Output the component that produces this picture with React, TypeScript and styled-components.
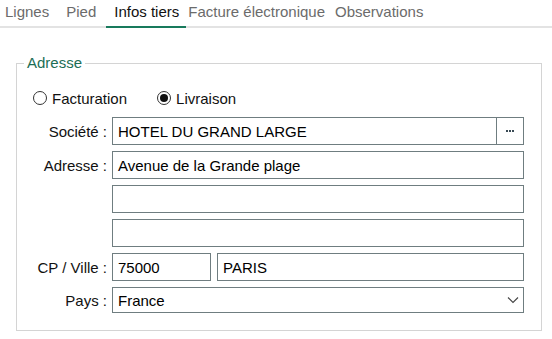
import React from "react";
import styled, { createGlobalStyle } from "styled-components";

const Global = createGlobalStyle`
  html, body { margin: 0; padding: 0; background: #fff; }
  body { font-family: "Liberation Sans", Arial, sans-serif; font-size: 15px; color: #111; }
`;

const Page = styled.div`
  width: 552px;
  height: 339px;
  overflow: hidden;
`;

const TabBar = styled.div`
  display: flex;
  align-items: flex-end;
  height: 26px;
  border-bottom: 2px solid #e3e3e3;
`;

const Tab = styled.div<{ $active?: boolean; $ml?: number }>`
  height: 26px;
  line-height: 24px;
  padding: 0 ${(p) => (p.$active ? "7px 0 8px" : "5px")};
  margin-left: ${(p) => p.$ml ?? 0}px;
  margin-bottom: -2px;
  color: ${(p) => (p.$active ? "#111" : "#6b6b6b")};
  border-bottom: 2px solid ${(p) => (p.$active ? "#187a5c" : "transparent")};
  white-space: nowrap;
`;

const Group = styled.fieldset`
  margin: 26px 10px 0 16px;
  padding: 16px 17px 17px 16px;
  border: 1px solid #d4d4d4;
  min-width: 0;
`;

const Legend = styled.legend`
  margin-left: -9px;
  padding: 0 3px;
  line-height: 18px;
  color: #1c6e55;
`;

const RadioRow = styled.div`
  display: flex;
  align-items: center;
  gap: 30px;
  height: 20px;
  margin-bottom: 9px;
`;

const RadioItem = styled.label`
  display: flex;
  align-items: center;
  gap: 5px;
  color: #111;
`;

const Circle = styled.span<{ $checked?: boolean }>`
  width: 12px;
  height: 12px;
  border: 1.5px solid #333;
  border-radius: 50%;
  display: flex;
  align-items: center;
  justify-content: center;
  &::after {
    content: "";
    width: 8px;
    height: 8px;
    border-radius: 50%;
    background: ${(p) => (p.$checked ? "#111" : "transparent")};
  }
`;

const Form = styled.div`
  display: grid;
  grid-template-columns: 74px 1fr;
  column-gap: 5px;
  row-gap: 6px;
  align-items: center;
`;

const Label = styled.div`
  text-align: right;
  white-space: nowrap;
  color: #111;
`;

const Field = styled.div<{ $h?: number; $w?: number }>`
  height: ${(p) => p.$h ?? 28}px;
  box-sizing: border-box;
  border: 1px solid #6f7d80;
  display: flex;
  align-items: center;
  padding-left: 5px;
  color: #000;
  flex: ${(p) => (p.$w ? `0 0 ${p.$w}px` : "1")};
  min-width: 0;
`;

const Combo = styled.div`
  display: flex;
`;

const DotsButton = styled.div`
  width: 27px;
  height: 28px;
  box-sizing: border-box;
  border: 1px solid #6f7d80;
  border-left: none;
  display: flex;
  align-items: center;
  justify-content: center;
  gap: 1px;
`;

const Dot = styled.span`
  width: 2px;
  height: 2px;
  background: #3a4a55;
`;

const Split = styled.div`
  display: flex;
  gap: 6px;
`;

const Select = styled(Field)`
  justify-content: space-between;
  padding-right: 4px;
`;

const Chevron = () => (
  <svg width="12" height="8" viewBox="0 0 12 8">
    <path d="M1 1.5 L6 6.5 L11 1.5" fill="none" stroke="#444" strokeWidth="1.1" />
  </svg>
);

export default function App() {
  return (
    <Page>
      <Global />
      <TabBar>
        <Tab>Lignes</Tab>
        <Tab $ml={7}>Pied</Tab>
        <Tab $active $ml={5}>Infos tiers</Tab>
        <Tab $ml={-3}>Facture électronique</Tab>
        <Tab $ml={0}>Observations</Tab>
      </TabBar>
      <Group>
        <Legend>Adresse</Legend>
        <RadioRow>
          <RadioItem>
            <Circle />
            Facturation
          </RadioItem>
          <RadioItem>
            <Circle $checked />
            Livraison
          </RadioItem>
        </RadioRow>
        <Form>
          <Label>Société :</Label>
          <Combo>
            <Field>HOTEL DU GRAND LARGE</Field>
            <DotsButton>
              <Dot />
              <Dot />
              <Dot />
            </DotsButton>
          </Combo>
          <Label>Adresse :</Label>
          <Field>Avenue de la Grande plage</Field>
          <div />
          <Field />
          <div />
          <Field />
          <Label>CP / Ville :</Label>
          <Split>
            <Field $w={99}>75000</Field>
            <Field>PARIS</Field>
          </Split>
          <Label>Pays :</Label>
          <Select $h={26}>
            France
            <Chevron />
          </Select>
        </Form>
      </Group>
    </Page>
  );
}
